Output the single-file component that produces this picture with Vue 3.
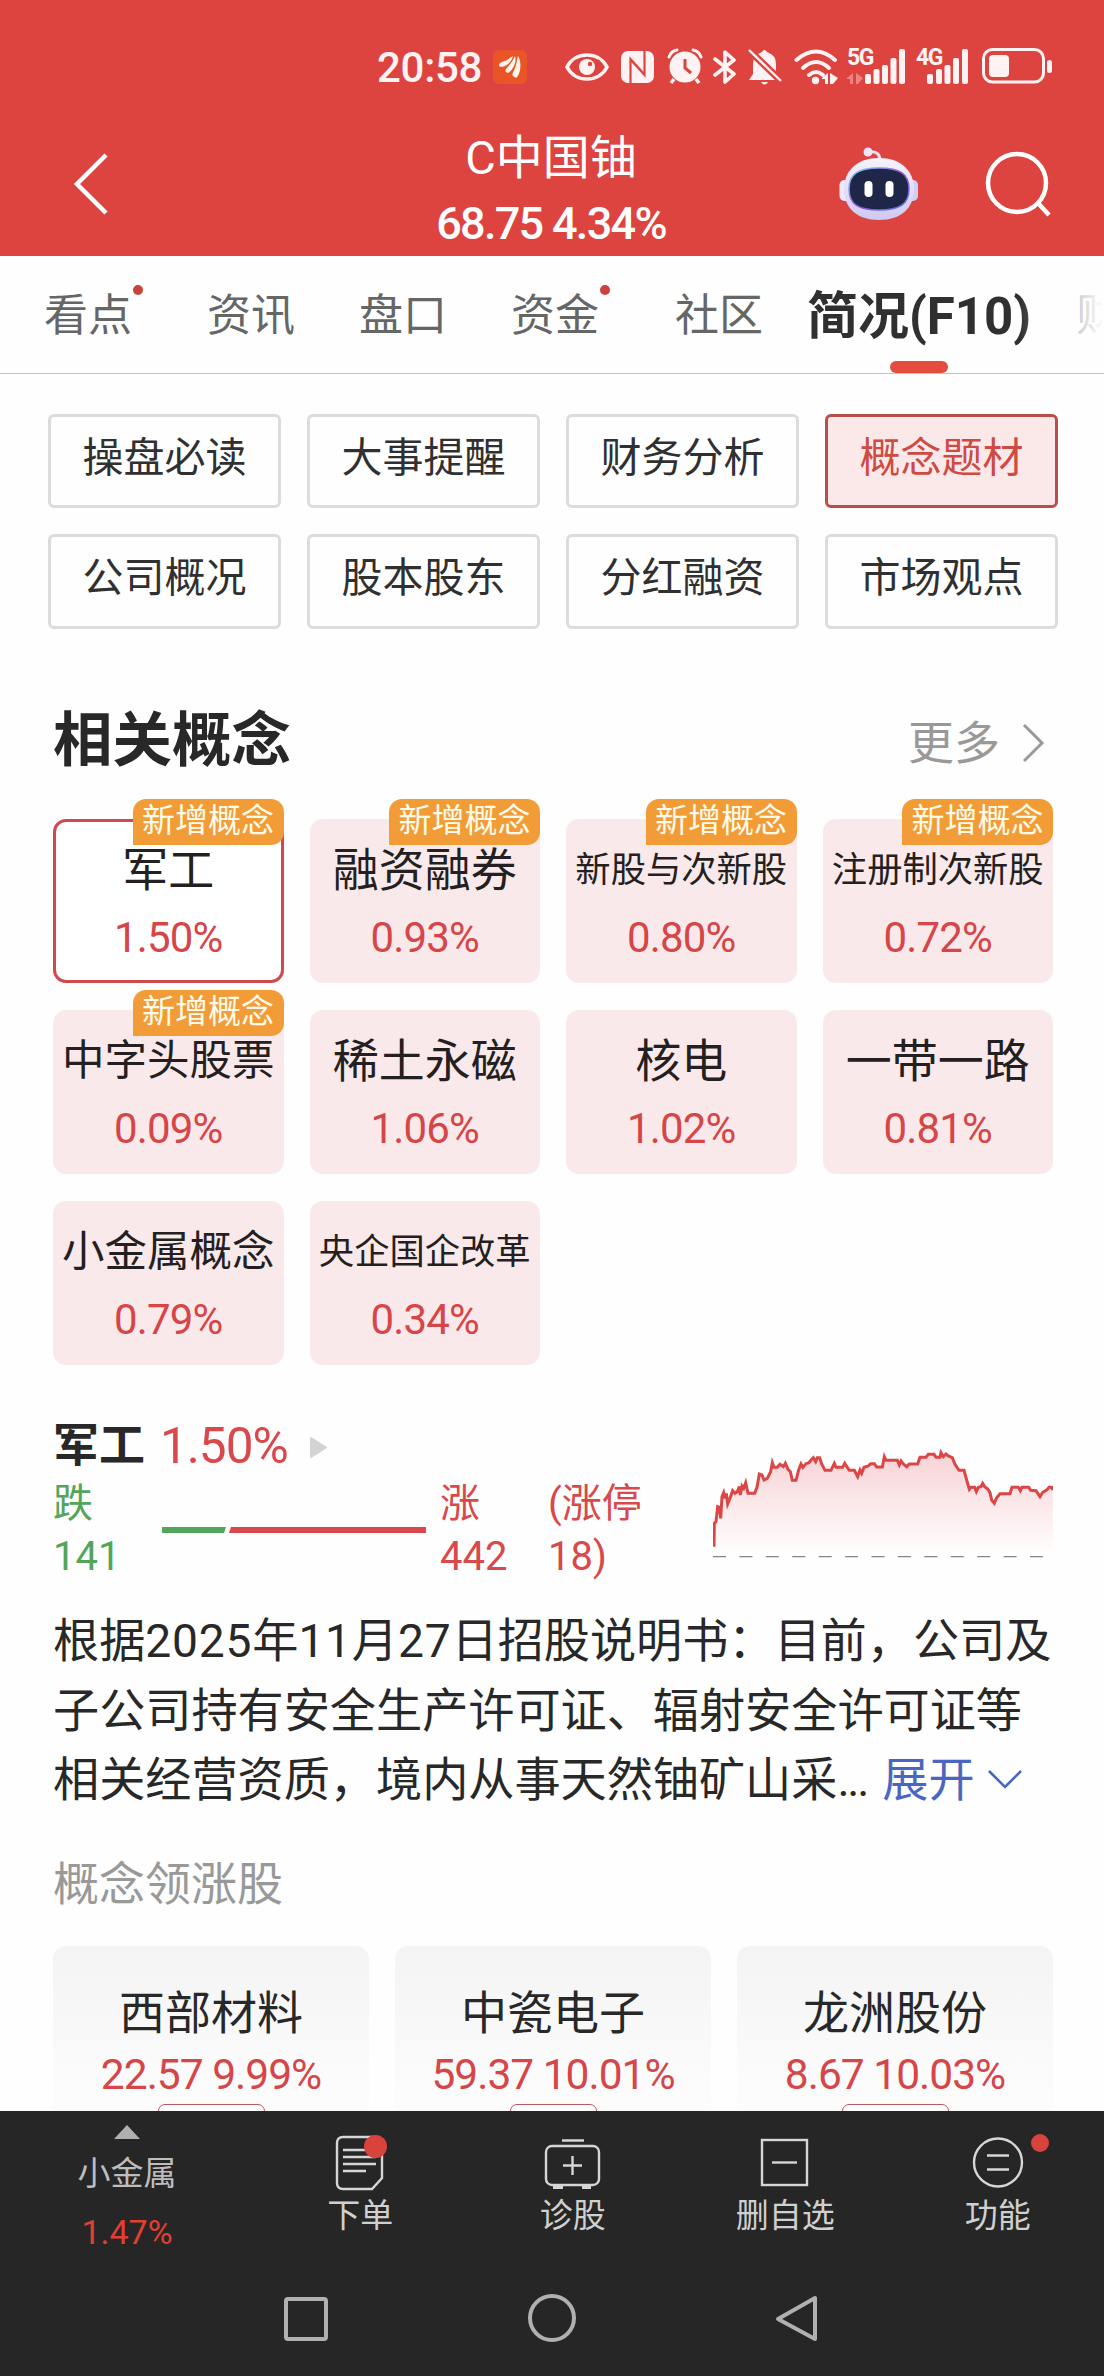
<template>
  <div class="page">
    <header class="header">
      <div class="status-bar">
        <span class="time">20:58</span>
        <svg class="app-icon" width="34" height="34" viewBox="0 0 34 34">
          <rect width="34" height="34" rx="6" fill="#ea5528" />
          <g fill="#fff6ea">
            <path d="M6 16 C6 12 10 12 14 10 C17 8 18 7 20 6 C19 11 14 17 8 17 Z" />
            <path d="M13 22 C11 20 15 17 18 13 C20 10 21 8 22 6 C24 12 20 20 15 23 Z" />
            <path d="M20 26 C18 24 22 20 23 15 C24 11 24 9 25 6 C29 12 28 24 23 28 Z" />
          </g>
        </svg>
        <svg class="eye" width="44" height="34" viewBox="0 0 44 34">
          <path d="M2 17 C10 1 34 1 42 17 C34 33 10 33 2 17 Z" fill="none" stroke="#fff2f2" stroke-width="3.6" />
          <circle cx="22" cy="17" r="8" fill="#fff2f2" />
          <circle cx="25" cy="14" r="2.2" fill="#dd4440" />
        </svg>
        <svg class="nfc" width="33" height="34" viewBox="0 0 33 34">
          <rect y="1" width="33" height="32" rx="7" fill="#fff2f2" />
          <path d="M9.500 33 V9 L23 24 M23.500 1 V25 L10 10" fill="none" stroke="#dd4440" stroke-width="2.200" />
        </svg>
        <svg class="alarm" width="36" height="36" viewBox="0 0 36 36">
          <circle cx="18" cy="19" r="15.500" fill="#fff2f2" />
          <path d="M2 9 Q4 3 10 2 M34 9 Q32 3 26 2" fill="none" stroke="#fff2f2" stroke-width="3" stroke-linecap="round" />
          <path d="M7 31 L4 35 M29 31 L32 35" stroke="#fff2f2" stroke-width="3.500" />
          <path d="M18 11 V20 L24 25" fill="none" stroke="#dd4440" stroke-width="3" />
        </svg>
        <svg class="bluetooth" width="24" height="36" viewBox="0 0 24 36">
          <path d="M2 10 L21 25 L12 33 V3 L21 11 L2 26" fill="none" stroke="#fff2f2" stroke-width="3.600" stroke-linejoin="round" stroke-linecap="round" />
        </svg>
        <svg class="bell" width="34" height="36" viewBox="0 0 34 36">
          <path d="M14 3 Q16.500 -1 19 3 Q28 6 28 15 V24 L33 31 H1 L5 25 V15 Q5 6 14 3 Z" fill="#fff2f2" />
          <path d="M13 33 H20 Q16.500 38 13 33" fill="#fff2f2" />
          <path d="M1 1 L34 33" stroke="#dd4440" stroke-width="7" />
          <path d="M1 1 L33 32" stroke="#fff2f2" stroke-width="2.400" />
        </svg>
        <svg class="wifi" width="44" height="36" viewBox="0 0 44 36">
          <g fill="none" stroke="#fff2f2" stroke-width="4" stroke-linecap="round">
            <path d="M2.500 11 Q22 -6 41 11" />
            <path d="M9 19 Q22 7 35 19" />
            <path d="M15 26 Q22 20 29 26" />
          </g>
          <circle cx="21.500" cy="31.500" r="3.700" fill="#fff2f2" />
          <path d="M28 29 L34 24 V35 H31 V30 H28 Z M36 35 V24 L44 29 L39 35 Z" fill="#fff2f2" />
        </svg>
        <div class="signal">
          <span class="network">5G</span>
          <svg width="60" height="36" viewBox="0 0 60 36">
            <path d="M1 29 L7 24 V35 H4 V30 H1 Z M10 35 V24 L17 29 L12 35 Z" fill="#ef8381" />
            <g fill="#fff2f2">
              <rect x="19" y="25" width="6" height="10" rx="2" />
              <rect x="27.500" y="20" width="6" height="15" rx="2" />
              <rect x="36" y="16" width="6" height="19" rx="2" />
              <rect x="44.500" y="9" width="6" height="26" rx="2" />
              <rect x="53" y="0" width="6" height="35" rx="2" />
            </g>
          </svg>
        </div>
        <div class="signal second">
          <span class="network">4G</span>
          <svg width="54" height="36" viewBox="6 0 54 36">
            <g fill="#fff2f2">
              <rect x="18" y="25" width="6" height="10" rx="2" />
              <rect x="27" y="20" width="6" height="15" rx="2" />
              <rect x="35.500" y="16" width="6" height="19" rx="2" />
              <rect x="44" y="9" width="6" height="26" rx="2" />
              <rect x="53" y="0" width="6" height="35" rx="2" />
            </g>
          </svg>
        </div>
        <svg class="battery" width="71" height="36" viewBox="0 0 71 36">
          <rect x="1.500" y="1.500" width="60" height="32.500" rx="9" fill="none" stroke="#fff2f2" stroke-width="3" />
          <rect x="7" y="7" width="20" height="22" rx="4" fill="#fff2f2" />
          <rect x="65" y="12" width="5" height="13" rx="2.500" fill="#fff2f2" />
        </svg>
      </div>

      <div class="nav-bar">
        <svg class="back" width="40" height="64" viewBox="0 0 40 64">
          <path d="M35 3 L6 32 L35 61" fill="none" stroke="#fff" stroke-width="4.500" />
        </svg>
        <div class="stock">
          <div class="stock-name">C中国铀</div>
          <div class="stock-price">68.75 4.34%</div>
        </div>
        <svg class="robot" width="80" height="74" viewBox="0 0 80 74">
          <defs>
            <linearGradient id="shell" x1="0" y1="0" x2="0" y2="1">
              <stop offset="0" stop-color="#f6f3fb" />
              <stop offset="1" stop-color="#cfc9f3" />
            </linearGradient>
            <linearGradient id="rim" x1="0" y1="0" x2="1" y2="1">
              <stop offset="0" stop-color="#7fd6ee" />
              <stop offset="0.500" stop-color="#8f55d8" />
              <stop offset="1" stop-color="#5b7be8" />
            </linearGradient>
          </defs>
          <path d="M29 5 Q41 3 41 14" fill="none" stroke="#eadff2" stroke-width="3" />
          <circle cx="29" cy="5" r="4.500" fill="#eee6f6" />
          <rect x="0.500" y="33" width="12" height="21" rx="5" fill="#eee9f8" />
          <rect x="67" y="33" width="12" height="21" rx="5" fill="#cfd0f6" />
          <path d="M40 11 C62 11 75 24 75 42 C75 61 62 73 40 73 C18 73 5 61 5 42 C5 24 18 11 40 11 Z" fill="url(#shell)" />
          <path d="M40 21 C61 21 70 27 70 42 C70 57 61 63 40 63 C19 63 10 57 10 42 C10 27 19 21 40 21 Z" fill="#1f2748" stroke="url(#rim)" stroke-width="1.500" />
          <rect x="25.500" y="34" width="8" height="16" rx="4" fill="#fff" />
          <rect x="46.500" y="34" width="8" height="16" rx="4" fill="#fff" />
        </svg>
        <svg class="search" width="70" height="70" viewBox="0 0 70 70">
          <circle cx="33" cy="33" r="29" fill="none" stroke="#fff" stroke-width="4.500" />
          <path d="M54 53 L65 65" stroke="#fff" stroke-width="4.500" />
        </svg>
      </div>
    </header>

    <nav class="tabs">
      <div v-for="tab in tabs" :key="tab.name" class="tab" :class="{ active: tab.name === currentTab, dotted: tab.dot }">
        {{ tab.name }}
      </div>
      <div class="fade"></div>
    </nav>

    <div class="sections">
      <div v-for="item in sections" :key="item" class="section-btn" :class="{ selected: item === currentSection }">{{ item }}</div>
    </div>

    <div class="title-row">
      <h2>相关概念</h2>
      <div class="more">
        更多
        <svg width="24" height="40" viewBox="0 0 24 40">
          <path d="M2 2 L20 20 L2 38" fill="none" stroke="#999" stroke-width="3" />
        </svg>
      </div>
    </div>

    <div class="concepts">
      <div v-for="concept in concepts" :key="concept.name" class="concept" :class="{ selected: concept.name === currentConcept }">
        <span v-if="concept.isNew" class="new-tag">新增概念</span>
        <div class="concept-name" :class="'len-' + concept.name.length">{{ concept.name }}</div>
        <div class="concept-rate">{{ concept.rate }}</div>
      </div>
    </div>

    <div class="summary">
      <div class="summary-left">
        <div class="summary-title">
          <strong>军工</strong>
          <span class="summary-rate">1.50%</span>
          <svg width="20" height="24" viewBox="0 0 20 24">
            <path d="M2 2 L17 11.500 L2 21 Z" fill="#d3d3d3" stroke="#d3d3d3" stroke-width="2" stroke-linejoin="round" />
          </svg>
        </div>
        <div class="breadth">
          <div class="down">跌<br>141</div>
          <svg width="264" height="6" viewBox="0 0 264 6">
            <path d="M0 0 H64 L62 6 H0 Z" fill="#53a55a" />
            <path d="M69 0 H264 V6 H67 Z" fill="#d9484a" />
          </svg>
          <div class="up">涨<br>442</div>
          <div class="limit">(涨停<br>18)</div>
        </div>
      </div>
      <svg class="chart" width="340" height="130" viewBox="69 0 1020 390">
        <defs>
          <linearGradient id="area" x1="0" y1="0" x2="0" y2="1">
            <stop offset="0" stop-color="#f7d3d6" />
            <stop offset="1" stop-color="#fff" />
          </linearGradient>
        </defs>
        <polygon :points="'69,380 ' + line + ' 1089,380'" fill="url(#area)" />
        <polyline :points="line" fill="none" stroke="#dc4647" stroke-width="9" />
        <path d="M69 380 H1089" stroke="#8a8284" stroke-width="4" stroke-dasharray="39 40.250" />
      </svg>
    </div>

    <p class="reason">
      根据<span class="num">2025</span>年<span class="num">11</span>月<span class="num">27</span>日招股说明书：目前，公司及<br>
      子公司持有安全生产许可证、辐射安全许可证等<br>
      相关经营资质，境内从事天然铀矿山采<span class="dots">...</span><span class="expand">展开<svg width="36" height="22" viewBox="0 0 36 22"><path d="M2 2 L18 18 L34 2" fill="none" stroke="#4a66c0" stroke-width="2.600" /></svg></span>
    </p>

    <h3 class="leaders-title">概念领涨股</h3>
    <div class="leaders">
      <div v-for="stock in leaders" :key="stock.name" class="leader">
        <div class="leader-name">{{ stock.name }}</div>
        <div class="leader-price">{{ stock.price }}</div>
        <div class="leader-tag" :class="{ narrow: stock.narrow }"></div>
      </div>
    </div>

    <footer class="footer">
      <div class="toolbar">
        <div class="tool index">
          <svg width="26" height="14" viewBox="0 0 26 14"><path d="M0 14 L13 0 L26 14 Z" fill="#b0b0b0" /></svg>
          <span>小金属</span>
          <span class="index-rate">1.47%</span>
        </div>
        <div class="tool">
          <svg width="70" height="62" viewBox="0 0 70 62" fill="none" stroke="#d6d6d6" stroke-width="2.400">
            <path d="M18 6 H52 Q57 6 57 11 V47 L47 58 H18 Q12 58 12 52 V12 Q12 6 18 6 Z" />
            <path d="M18 19 H45 M18 26 H51 M18 33 H51 M18 40 H41" />
            <circle cx="50.500" cy="15.500" r="11.500" fill="#d8433c" stroke="none" />
          </svg>
          <span>下单</span>
        </div>
        <div class="tool">
          <svg width="70" height="62" viewBox="0 0 70 62" fill="none" stroke="#d6d6d6" stroke-width="2.400">
            <rect x="8" y="15" width="53" height="39" rx="6" />
            <path d="M24 9.500 H46 M34.500 25 V44 M25 34.500 H44" />
            <path d="M15 56 H25 M44 56 H53" stroke-width="4" />
          </svg>
          <span>诊股</span>
        </div>
        <div class="tool">
          <svg width="70" height="62" viewBox="0 0 70 62" fill="none" stroke="#d6d6d6" stroke-width="2.400">
            <rect x="12" y="9" width="45" height="45" />
            <path d="M22 31.500 H47" />
          </svg>
          <span>删自选</span>
        </div>
        <div class="tool has-dot">
          <svg width="70" height="62" viewBox="0 0 70 62" fill="none" stroke="#d6d6d6" stroke-width="2.400">
            <circle cx="35" cy="31.500" r="24" />
            <path d="M24 24.500 H46 M24 38.500 H46" />
          </svg>
          <span>功能</span>
        </div>
      </div>
      <div class="system-nav">
        <svg width="50" height="50" viewBox="0 0 50 50"><rect x="5" y="5" width="40" height="40" rx="2" fill="none" stroke="#b0b0b0" stroke-width="4" /></svg>
        <svg width="50" height="50" viewBox="0 0 50 50"><circle cx="25" cy="24" r="22" fill="none" stroke="#b0b0b0" stroke-width="4" /></svg>
        <svg width="50" height="50" viewBox="0 0 50 50"><path d="M43 4 V45 L6 25 Z" fill="none" stroke="#b0b0b0" stroke-width="4" stroke-linejoin="round" /></svg>
      </div>
    </footer>
  </div>
</template>

<script setup>
import { ref } from 'vue';

const currentTab = ref('简况(F10)');
const currentSection = ref('概念题材');
const currentConcept = ref('军工');

const tabs = [
  { name: '看点', dot: true },
  { name: '资讯' },
  { name: '盘口' },
  { name: '资金', dot: true },
  { name: '社区' },
  { name: '简况(F10)' },
  { name: '财' },
];

const sections = ['操盘必读', '大事提醒', '财务分析', '概念题材', '公司概况', '股本股东', '分红融资', '市场观点'];

const concepts = [
  { name: '军工', rate: '1.50%', isNew: true },
  { name: '融资融券', rate: '0.93%', isNew: true },
  { name: '新股与次新股', rate: '0.80%', isNew: true },
  { name: '注册制次新股', rate: '0.72%', isNew: true },
  { name: '中字头股票', rate: '0.09%', isNew: true },
  { name: '稀土永磁', rate: '1.06%' },
  { name: '核电', rate: '1.02%' },
  { name: '一带一路', rate: '0.81%' },
  { name: '小金属概念', rate: '0.79%' },
  { name: '央企国企改革', rate: '0.34%' },
];

const leaders = [
  { name: '西部材料', price: '22.57 9.99%' },
  { name: '中瓷电子', price: '59.37 10.01%', narrow: true },
  { name: '龙洲股份', price: '8.67 10.03%' },
];

const line = [
  '72,350 73,280 78,275 83,230 88,232 92,265 96,200 101,188 105,205 109,190 113,222 120,205 128,182 135,190',
  '142,185 148,170 151,195 156,168 161,175 167,158 174,190 194,190 201,172 208,132 216,135 222,150 232,145',
  '242,125 247,98 252,112 262,112 270,103 280,110 286,100 294,118 301,125 307,151 318,151 326,120 333,102',
  '339,112 348,101 357,98 363,90 370,83 377,95 382,83 389,83 395,102 405,121 423,121 433,100 438,112 458,112',
  '464,100 472,112 478,121 493,121 503,140 510,120 515,130 522,112 535,108 542,101 553,101 560,111 577,111',
  '583,80 588,91 622,91 628,105 633,93 640,102 650,110 658,102 683,102 690,82 708,82 715,73 732,73 738,82',
  '750,82 753,68 760,80 768,72 775,78 787,83 795,103 807,121 822,121 830,150 838,178 843,172 854,172 859,185',
  '865,172 873,170 878,160 884,170 893,177 900,188 905,210 913,220 920,203 930,191 960,191 966,172 985,172',
  '991,182 996,172 1016,172 1022,181 1038,182 1050,200 1058,187 1070,180 1078,171 1085,172 1088,180',
].join(' ');
</script>

<style>
body {
  margin: 0;
}
</style>

<style scoped>
.page {
  width: 1104px;
  height: 2376px;
  display: flex;
  flex-direction: column;
  overflow: hidden;
  background: #fefefe;
  color: #282828;
  font-family: Roboto, "Noto Sans CJK SC", sans-serif;
}

svg {
  display: block;
  flex: none;
}

.header {
  flex: none;
  height: 256px;
  background: #dd4440;
  color: #fff;
}

.status-bar {
  height: 86px;
  padding: 48px 0 0 377px;
  box-sizing: border-box;
  display: flex;
  align-items: flex-start;
}

.time {
  width: 116px;
  font-size: 42px;
  font-weight: 500;
  line-height: 39px;
  letter-spacing: -0.3px;
  color: #fff2f2;
}

.app-icon {
  margin-top: 2px;
}

.eye {
  margin: 2px 0 0 38px;
}

.nfc {
  margin: 2px 0 0 12px;
}

.alarm {
  margin: 0 0 0 13px;
}

.bluetooth {
  margin: 1px 0 0 10px;
}

.bell {
  margin: 1px 0 0 11px;
}

.wifi {
  margin: 1px 0 0 12px;
}

.signal {
  position: relative;
  margin: 1px 0 0 8px;
}

.signal.second {
  margin-left: 9px;
}

.network {
  position: absolute;
  top: -1px;
  left: 1px;
  font-size: 23px;
  font-weight: 700;
  line-height: 20px;
  letter-spacing: -1.5px;
  color: #fff2f2;
}

.battery {
  margin: 0 0 0 13px;
}

.nav-bar {
  display: flex;
  align-items: center;
  height: 170px;
  padding: 0 50px 0 71px;
}

.back {
  margin-top: 26px;
}

.stock {
  flex: 1;
  padding: 39px 0 0 152px;
  text-align: center;
}

.stock-name {
  font-size: 47px;
  line-height: 66px;
}

.stock-price {
  font-size: 45px;
  font-weight: 500;
  line-height: 66px;
  letter-spacing: -1.7px;
}

.robot {
  margin-top: 25px;
}

.search {
  margin: 28px 0 0 65px;
}

.tabs {
  position: relative;
  flex: none;
  display: flex;
  height: 117px;
  padding-left: 44px;
  border-bottom: 1px solid #c4c4c4;
  overflow: hidden;
}

.tab {
  position: relative;
  flex: none;
  margin-right: 64px;
  font-size: 44px;
  line-height: 121px;
  color: #666;
  white-space: nowrap;
}

.tab:last-of-type {
  margin-right: 0;
}

.tab.dotted {
  margin-right: 75px;
}

.tab.dotted:nth-child(4) {
  margin-right: 76px;
}

.tab:nth-child(5) {
  margin-right: 44px;
}

.dotted::after {
  content: "";
  position: absolute;
  top: 29px;
  right: -11px;
  width: 10px;
  height: 10px;
  border-radius: 50%;
  background: #c9423c;
}

.tab.active {
  margin-right: 45px;
  font-size: 51px;
  font-weight: 700;
  color: #303030;
}

.tab.active::after {
  content: "";
  position: absolute;
  left: 50%;
  bottom: 0;
  width: 58px;
  height: 12px;
  margin-left: -29px;
  border-radius: 6px;
  background: #e44c3f;
}

.fade {
  position: absolute;
  top: 0;
  right: 0;
  width: 84px;
  height: 100px;
  background: linear-gradient(to right, rgba(254, 254, 254, 0), #fefefe);
}

.sections {
  flex: none;
  display: grid;
  grid-template-columns: repeat(4, 1fr);
  grid-template-rows: 94px 95px;
  gap: 26px;
  padding: 40px 46px 0 48px;
}

.section-btn {
  box-sizing: border-box;
  border: 3px solid #dcdcdc;
  border-radius: 6px;
  font-size: 41px;
  line-height: 83px;
  text-align: center;
  color: #303030;
}

.section-btn.selected {
  border-color: #b94f4b;
  background: #fbe9e9;
  color: #ce4a42;
}

.title-row {
  flex: none;
  display: flex;
  justify-content: space-between;
  align-items: center;
  height: 80px;
  margin-top: 72px;
  padding: 0 58px 0 53px;
}

.title-row h2 {
  margin: 0;
  font-size: 59.5px;
  line-height: 80px;
}

.more {
  display: flex;
  align-items: center;
  gap: 22px;
  margin-top: -5px;
  font-size: 46px;
  color: #999;
}

.more svg {
  margin-top: 8px;
}

.concepts {
  flex: none;
  display: grid;
  grid-template-columns: repeat(4, 1fr);
  grid-auto-rows: 164px;
  gap: 27px 26px;
  padding: 38px 51px 0 53px;
}

.concept {
  position: relative;
  box-sizing: border-box;
  padding-top: 20px;
  border-radius: 13px;
  background: #fae9eb;
  text-align: center;
}

.concept.selected {
  padding-top: 17px;
  border: 3px solid #cf4a4d;
  background: #fff;
}

.new-tag {
  position: absolute;
  top: -20px;
  right: 0;
  width: 151px;
  height: 46px;
  border-radius: 13px 13px 13px 0;
  background: #f29c38;
  font-size: 33px;
  line-height: 44px;
  color: #fffbe8;
}

.selected .new-tag {
  top: -23px;
  right: -3px;
}

.concept-name {
  font-size: 46px;
  line-height: 62px;
  color: #241f20;
  white-space: nowrap;
}

.concept-name.len-5 {
  font-size: 42.5px;
}

.concept-name.len-6 {
  font-size: 35.3px;
}

.concept-rate {
  margin-top: 7px;
  font-size: 42px;
  line-height: 60px;
  letter-spacing: -0.8px;
  color: #d64547;
}

.summary {
  flex: none;
  display: flex;
  justify-content: space-between;
  padding: 50px 51px 0 53px;
}

.summary-title {
  display: flex;
  align-items: center;
  height: 60px;
}

.summary-title strong {
  font-size: 46px;
  line-height: 60px;
}

.summary-rate {
  margin: 2px 21px 0 15px;
  font-size: 49.5px;
  letter-spacing: -1px;
  color: #d9484a;
}

.summary-title svg {
  margin-top: 6px;
}

.breadth {
  display: flex;
  align-items: center;
  margin-top: 2px;
  font-size: 40px;
  line-height: 53px;
}

.down {
  width: 109px;
  color: #53a55a;
}

.up {
  width: 93px;
  margin-left: 14px;
  color: #d9484a;
}

.limit {
  margin-left: 15px;
  color: #d9484a;
}

.chart {
  margin-top: 15px;
}

.reason {
  flex: none;
  margin: 24px 0 0;
  padding-left: 53px;
  font-size: 46.15px;
  line-height: 69.5px;
  white-space: nowrap;
}

.num {
  letter-spacing: 0.8px;
}

.dots {
  letter-spacing: -2.2px;
}

.expand {
  display: inline-flex;
  align-items: center;
  gap: 12px;
  margin-left: 15px;
  line-height: 60px;
  color: #4a66c0;
}

.leaders-title {
  flex: none;
  margin: 38.5px 0 0;
  padding-left: 53px;
  font-size: 46px;
  font-weight: 400;
  line-height: 60px;
  color: #999;
}

.leaders {
  flex: none;
  display: grid;
  grid-template-columns: repeat(3, 1fr);
  gap: 26px;
  height: 165px;
  margin-top: 32px;
  padding: 0 51px 0 53px;
  overflow: hidden;
}

.leader {
  height: 240px;
  padding-top: 37px;
  box-sizing: border-box;
  border-radius: 13px;
  background: linear-gradient(#f4f4f4, #fcfcfc 150px);
  text-align: center;
}

.leader-name {
  font-size: 46px;
  line-height: 60px;
}

.leader-price {
  margin-top: 3px;
  font-size: 42.5px;
  line-height: 58px;
  letter-spacing: -1px;
  color: #d64547;
}

.leader-tag {
  width: 107px;
  height: 40px;
  margin: 0 auto;
  box-sizing: border-box;
  border: 1.5px solid #b85a5c;
  border-radius: 7px;
}

.leader-tag.narrow {
  width: 87px;
}

.footer {
  flex: 1;
  background: #262626;
}

.toolbar {
  display: grid;
  grid-template-columns: 254px repeat(4, 1fr);
  height: 172px;
}

.tool {
  position: relative;
  display: flex;
  flex-direction: column;
  align-items: center;
  padding-top: 20px;
  font-size: 33px;
  line-height: 46px;
  color: #d0d0d0;
}

.tool.index {
  padding-top: 14px;
  color: #bdbdbd;
}

.index span {
  margin-top: 12px;
}

.tool .index-rate {
  font-size: 34px;
  color: #e23f31;
}

.has-dot::after {
  content: "";
  position: absolute;
  top: 23px;
  left: 139px;
  width: 18px;
  height: 18px;
  border-radius: 50%;
  background: #d8433c;
}

.system-nav {
  display: flex;
  justify-content: space-between;
  padding: 11px 282px 0 281px;
}
</style>
